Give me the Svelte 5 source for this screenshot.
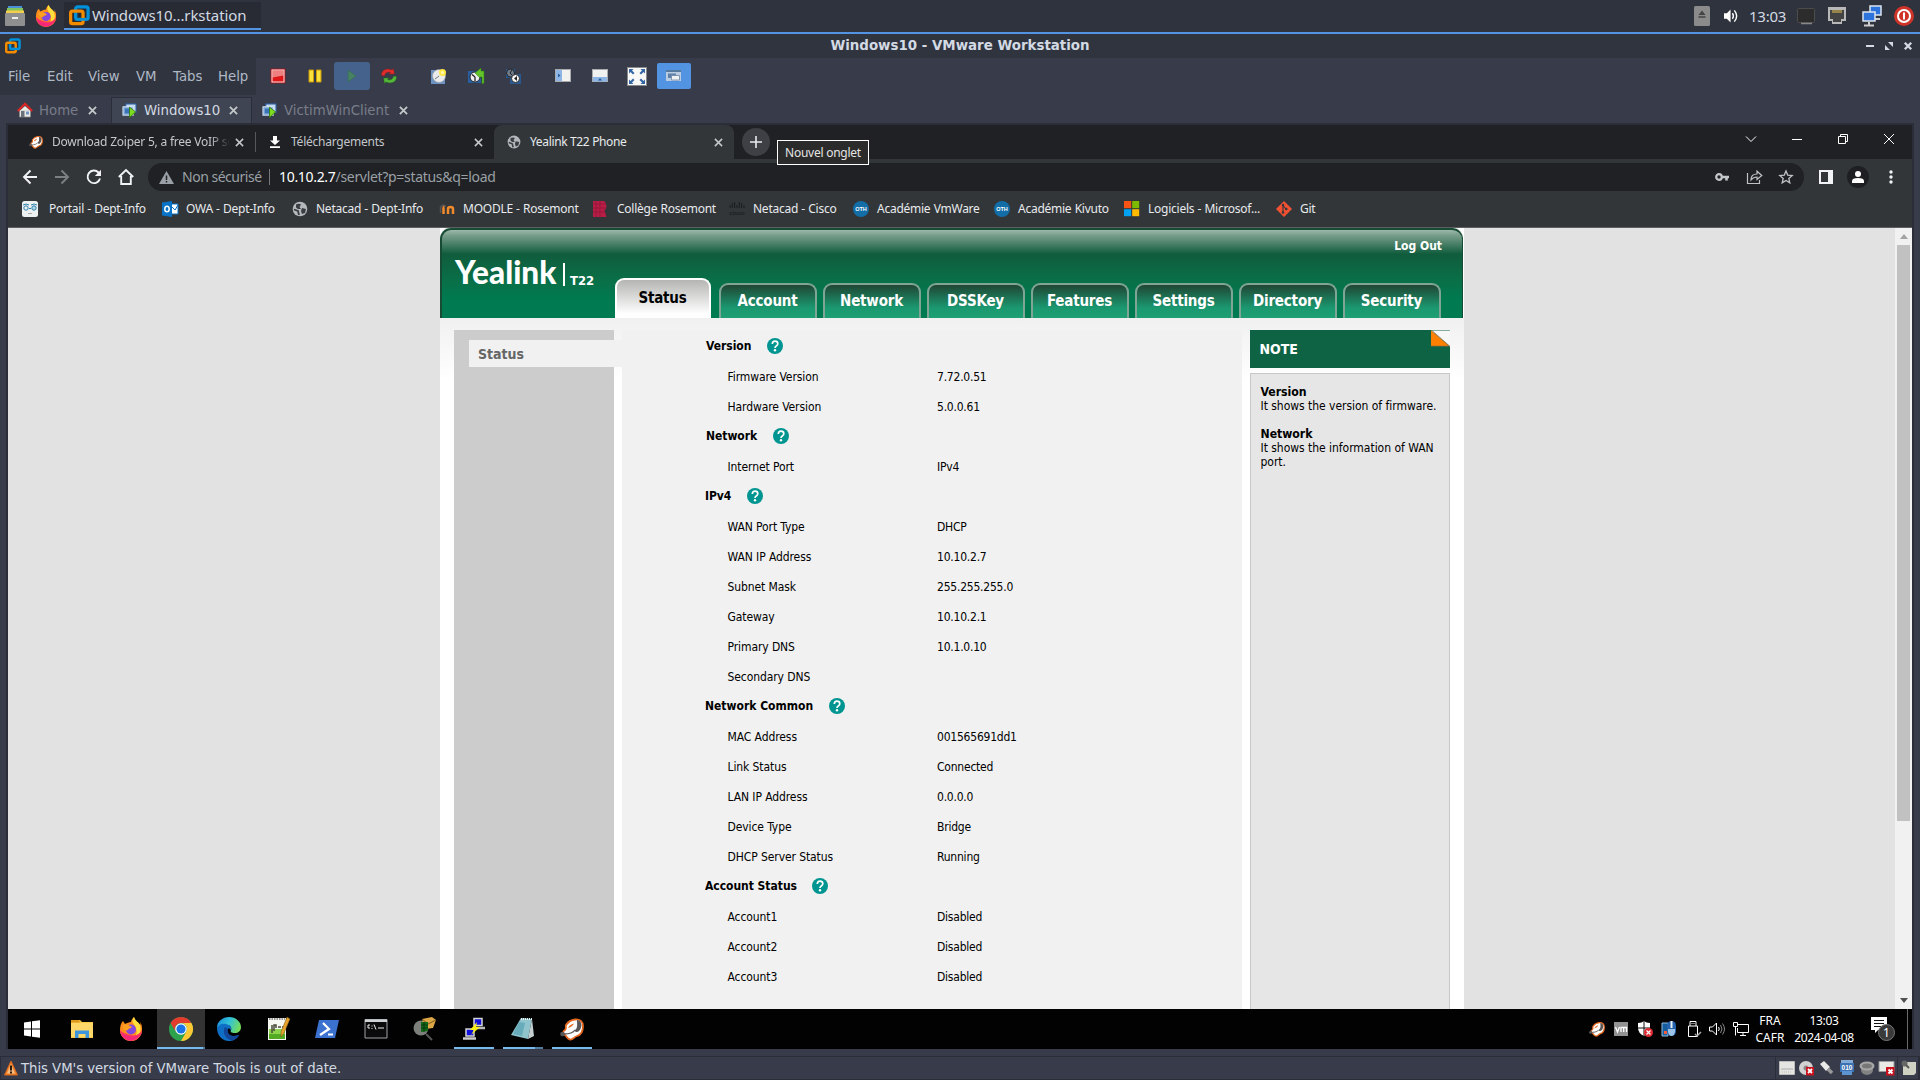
<script>
  const menus = ['File', 'Edit', 'View', 'VM', 'Tabs', 'Help'];
  const bookmarks = [
    ['portail', 'Portail - Dept-Info'],
    ['owa', 'OWA - Dept-Info'],
    ['globe', 'Netacad - Dept-Info'],
    ['moodle', 'MOODLE - Rosemont'],
    ['rosemont', 'Collège Rosemont'],
    ['cisco', 'Netacad - Cisco'],
    ['oth', 'Académie VmWare'],
    ['oth', 'Académie Kivuto'],
    ['microsoft', 'Logiciels - Microsof...'],
    ['git', 'Git']
  ];
  const navTabs = ['Account', 'Network', 'DSSKey', 'Features', 'Settings', 'Directory', 'Security'];
  const sections = [
    { title: 'Version', key: 'version', rows: [['Firmware Version', '7.72.0.51'], ['Hardware Version', '5.0.0.61']] },
    { title: 'Network', key: 'network', rows: [['Internet Port', 'IPv4']] },
    {
      title: 'IPv4', key: 'ipv4',
      rows: [
        ['WAN Port Type', 'DHCP'], ['WAN IP Address', '10.10.2.7'], ['Subnet Mask', '255.255.255.0'],
        ['Gateway', '10.10.2.1'], ['Primary DNS', '10.1.0.10'], ['Secondary DNS', '']
      ]
    },
    {
      title: 'Network Common', key: 'common',
      rows: [
        ['MAC Address', '001565691dd1'], ['Link Status', 'Connected'], ['LAN IP Address', '0.0.0.0'],
        ['Device Type', 'Bridge'], ['DHCP Server Status', 'Running']
      ]
    },
    { title: 'Account Status', key: 'account', rows: [['Account1', 'Disabled'], ['Account2', 'Disabled'], ['Account3', 'Disabled']] }
  ];
  const taskApps = ['windows', 'explorer', 'firefox', 'chrome', 'edge', 'notepadpp', 'powershell', 'cmd', 'wireshark', 'putty', 'notepad', 'zoiper'];
</script>

{#snippet vmware()}
  <rect x="7" y="1.5" width="13" height="13" rx="2" fill="none" stroke="#0091da" stroke-width="3.4" />
  <rect x="1.7" y="6" width="13" height="13" rx="2" fill="none" stroke="#f38b00" stroke-width="3.4" />
  <path d="M7 9V12.500M9.500 14.500h7" stroke="#0091da" stroke-width="3" fill="none" />
{/snippet}

{#snippet vmicon()}
  <rect x="4" y="1" width="11" height="9" fill="#c4d9ef" stroke="#2a5b9c" stroke-width="1.2" />
  <rect x="1" y="4" width="11" height="9" fill="#7fa8d6" stroke="#d9e7f6" stroke-width="1" />
  <rect x="3" y="6" width="7" height="5" fill="#3a74b8" />
  <path d="M8 4.500 14.500 9.500 8 15.500Z" fill="#7ddc1f" stroke="#2f7a0a" stroke-width=".9" />
{/snippet}

{#snippet cross()}
  <svg class="cross" viewBox="0 0 10 10"><path d="m1 1 8 8M9 1 1 9" /></svg>
{/snippet}

{#snippet firefox()}
  <path d="M1 13C1 9 2 6 4 4l2 3c2-1 4-2 6-2 0-2 2-4 3-5 1 4 4 5 6 8 1-1 0-2 0-3 2 3 2 5 2 8a11 11 0 0 1-22 0Z" fill="#ff8d1c" />
  <path d="M15 0c1 4 5 5 6 8 2 7-1 12-7 14 5-5 4-9 2-13-2-3-4-6-1-9Z" fill="#ffdf3b" />
  <path d="M1 13a11 11 0 0 0 22 0c-2 4-6 6-11 5-6-1-9-3-11-5Z" fill="#ff3a5d" />
  <path d="M2 15a10 10 0 0 0 12 8c3-1 5-3 7-5-4 2-14 3-19-3Z" fill="#ee1a8f" opacity=".6" />
  <circle cx="12" cy="12.500" r="5" fill="#8149e0" />
  <path d="M4 8c3-1 6 0 9 2-1 2-4 1-4 3-3 1-6-1-5-5Z" fill="#ffa022" />
{/snippet}

{#snippet zoiper()}
  <path d="M6 8C8 5 11 3 15 2.500c5-.5 8 2 8 6.500 0 5-2 9-6 10-3 1-4 4-7 3.500-3-.5-3-3-5-4.500-3-1-2-4 0-5 2-2 0-3 1-5Z" fill="#fff" stroke="#e5671d" stroke-width="1.800" />
  <path d="M8 11c1-2 3-4 6-4.500-1 2-3 4-6 4.500Z" fill="#e5671d" />
  <path d="M17 3c5 0 6 7 2 11-2 2-4.500 1-4-1 3-2 2-6 2-10Z" fill="#5a5656" />
  <circle cx="2.500" cy="17" r="2.300" fill="#5b5656" /><path d="M4 17c5 0 9-1 11-4" stroke="#5b5656" stroke-width="1.300" fill="none" />
{/snippet}

{#snippet globe()}
  <circle cx="8" cy="8" r="7.300" fill="#b4b8bc" />
  <path d="M4 3.500c2-1 4-1 5 0L7.500 6 9 8H6L4 6.500ZM10 7l4 1-1 4-3 1-1-3Z" fill="#3a3d41" />
  <path d="M2 8.500 6 10l1 4" stroke="#3a3d41" stroke-width="1.800" fill="none" />
{/snippet}

<div class="desktop">
  <header class="panel">
    <svg class="cabinet" viewBox="0 0 20 20"><path d="M3 0h14v3H3z" fill="#4a8fd6" /><path d="M2 2h16v4H2z" fill="#82c35a" /><path d="M1 4.500h18V8H1z" fill="#f5cf4c" /><rect y="7" width="20" height="13" rx="1" fill="#8f8f8f" /><path d="M7 12h6" stroke="#eee" stroke-width="2" /></svg>
    <svg class="pfox" viewBox="0 0 24 24">{@render firefox()}</svg>
    <div class="taskbtn"><svg viewBox="0 0 22 21">{@render vmware()}</svg><span>Windows10...rkstation</span></div>
    <div class="paneltray">
      <svg class="eject" viewBox="0 0 16 20"><rect width="16" height="20" rx="1.500" fill="#8b8b8b" /><path d="M8 4.500 11.500 9h-7ZM4.500 10.200h7v1.500h-7Z" fill="#444" /></svg>
      <svg class="vol" viewBox="0 0 16 14"><path d="M0 4h3l4-4v14l-4-4H0Z" fill="#fff" /><path d="M9 4q2 3 0 6M11 1q5 6 0 12" fill="none" stroke="#fff" stroke-width="1.500" /></svg>
      <span>13:03</span>
      <svg class="mon" viewBox="0 0 18 17"><rect x=".5" y=".5" width="17" height="14" rx="1" fill="#2c2c2c" stroke="#4c4c4c" /><path d="M4 15.500h11" stroke="#888" stroke-width="1.500" /></svg>
      <svg class="eth" viewBox="0 0 20 18"><path d="M1 0h18v14h-4v3H5v-3H1Z" fill="#b8b8b8" /><path d="M3 3h14v9h-3v3H6v-3H3Z" fill="#444" /><path d="M6 3v3M8 3v3M10 3v3M12 3v3M14 3v3" stroke="#e8c550" /></svg>
      <svg class="net" viewBox="0 0 20 22"><rect x="8" y="1" width="11" height="9" fill="#2d73dc" stroke="#dce6ef" stroke-width="1.500" /><path d="M11 14h7" stroke="#ccc" stroke-width="2" /><rect x="1" y="7" width="12" height="9" fill="#2d73dc" stroke="#dce6ef" stroke-width="1.500" /><path d="M7 17v3M2 20.500h10" stroke="#ccc" stroke-width="2" /></svg>
      <svg class="power" viewBox="0 0 20 20"><circle cx="10" cy="10" r="10" fill="#cf3429" /><circle cx="10" cy="10" r="6" fill="none" stroke="#fff" stroke-width="2" /><path d="M10 6.500v7" stroke="#fff" stroke-width="2" /></svg>
    </div>
  </header>

  <div class="titlebar">
    <svg class="tlogo" viewBox="0 0 22 21">{@render vmware()}</svg>
    <b>Windows10 - VMware Workstation</b>
    <div class="wm">
      <svg viewBox="0 0 8 8"><path d="M0 4h8" stroke="#d3dae3" stroke-width="2" /></svg>
      <svg viewBox="0 0 8 8"><path d="M3 0h5v5ZM0 3v5h5Z" fill="#d3dae3" /></svg>
      <svg viewBox="0 0 8 8"><path d="m.8.8 6.400 6.400M7.200.8.800 7.200" stroke="#d3dae3" stroke-width="2.300" /></svg>
    </div>
  </div>

  <div class="menurow">
    <nav class="menus">{#each menus as m}<span>{m}</span>{/each}</nav>
    <div class="tools">
      <svg class="t1" viewBox="0 0 16 16"><rect x="1" y="1" width="14" height="14" fill="#dd1717" stroke="#a01218" stroke-width=".8" /><path d="M2.500 2.500h11v5l-11 2Z" fill="#ee8080" /><rect x="2" y="2" width="12" height="12" fill="none" stroke="#f9e3e3" /></svg>
      <svg class="t2" viewBox="0 0 16 16"><path d="M2 2h4.500v12H2zM9.500 2H14v12H9.500z" fill="#fbe13b" stroke="#c99908" /></svg>
      <div class="play"><svg viewBox="0 0 16 16"><path d="m4 2 8 6-8 6Z" fill="#478360" stroke="#3b6c66" /></svg></div>
      <svg class="t4" viewBox="0 0 16 16"><path d="M.5 7.500C0 2 6-.5 11 2L12.500.500 13.500 6 8 6 9.500 4.500C6 3.500 4 5 3.500 8Z" fill="#e22c2c" stroke="#811c20" stroke-width=".5" /><path d="M15.500 8.500C16 14 10 16.500 5 14L3.500 15.500 2.500 10 8 10 6.500 11.500C10 12.500 12 11 12.500 8Z" fill="#56b83a" stroke="#205d1a" stroke-width=".5" /></svg>
      <svg class="t5" viewBox="0 0 16 16"><path d="M0 2h14v14H0Z" fill="#6d93c5" /><circle cx="8" cy="8" r="6.500" fill="#e8eaec" stroke="#999" stroke-width=".6" /><path d="M8 8 4 11" stroke="#777" /><circle cx="11.500" cy="4.500" r="3.500" fill="#ffe640" /><circle cx="11.500" cy="4.500" r="1.500" fill="#fffac0" /></svg>
      <svg class="t6" viewBox="0 0 16 16"><path d="M0 3h13v12H0Z" fill="#295fa0" /><circle cx="7" cy="9" r="5" fill="#eceef0" stroke="#222" /><path d="M7 9 4 6.500M7 9v4" stroke="#222" stroke-width="1.300" /><path d="M7 5 13 0v3h3v12l-2 1V9h-2v1Z" fill="#62c32b" stroke="#2e7a0c" stroke-width=".5" /></svg>
      <svg class="t7" viewBox="0 0 16 16"><path d="M1 1h9v9H1ZM5 6h11v10H5Z" fill="#27588f" /><circle cx="5.500" cy="5" r="4" fill="#6f7c8c" stroke="#222" /><path d="M7 2 5 5l2 2" stroke="#222" fill="none" /><circle cx="10.500" cy="10.500" r="4" fill="#f5f5f5" stroke="#2a2a2a" /><path d="M12 8v5l-3-2.500Z" fill="#222" /></svg>
      <svg class="t8" viewBox="0 0 16 14"><rect x=".5" y=".5" width="15" height="12" fill="#f1f1ef" stroke="#a9abae" /><path d="M1 1h6v11H1Z" fill="#8db5e5" /><path d="m3 4.500 2.500 2L3 8.500Z" fill="#285b9d" /></svg>
      <svg class="t9" viewBox="0 0 16 14"><rect x=".5" y=".5" width="15" height="12" fill="#f1f1ef" stroke="#a9abae" /><path d="M1 8h14v4.500H1Z" fill="#8db5e5" /><path d="m6 11.500 2-2.500 2 2.500Z" fill="#285b9d" /></svg>
      <svg class="t10" viewBox="0 0 20 19"><rect x=".5" y=".5" width="19" height="18" fill="#f8f8f6" stroke="#88898b" /><path d="M2 2h4.500L5 3.500 7.500 6 6 7.500 3.500 5 2 6.500ZM18 2h-4.500L15 3.500 12.500 6 14 7.500 16.500 5 18 6.500ZM2 17h4.500L5 15.500 7.500 13 6 11.500 3.500 14 2 12.500ZM18 17h-4.500l1.500-1.500-2.500-2.500 1.500-1.500 2.500 2.500 1.500-1.500Z" fill="#3465a4" /></svg>
      <div class="unity"><svg viewBox="0 0 16 14"><path d="M0 1h15v11H0Z" fill="#b9cce2" /><path d="M0 1h15v2H0Z" fill="#56799f" /><path d="M2 4.500h8V9H2Z" fill="#5d7fa8" /><path d="M5.500 6.500h8V11h-8Z" fill="#eef0f2" stroke="#6f88a5" stroke-width=".8" /></svg></div>
    </div>
  </div>

  <div class="vmtabs">
    <div class="vt home"><svg class="vi" viewBox="0 0 16 16"><path d="M2.500 8h11v7h-11Z" fill="#e9e9e6" stroke="#888" stroke-width=".7" /><path d="M4 9h3.500v6H4Z" fill="#67717a" /><path d="M9 9.500h3v3H9Z" fill="#7296c0" /><path d="M3 8.500 8 4l5 4.500Z" fill="#e9e9e6" /><path d="M.8 9 8 1.700 15.200 9" fill="none" stroke="#dd2525" stroke-width="2" /></svg><span>Home</span>{@render cross()}</div>
    <div class="vt on"><svg class="vi" viewBox="0 0 16 16">{@render vmicon()}</svg><span>Windows10</span>{@render cross()}</div>
    <div class="vt"><svg class="vi" viewBox="0 0 16 16">{@render vmicon()}</svg><span>VictimWinClient</span>{@render cross()}</div>
  </div>

  <main class="screen">
    <div class="strip">
      <div class="ct c1"><svg class="ci" viewBox="0 0 24 24">{@render zoiper()}</svg><span class="fade">Download Zoiper 5, a free VoIP so</span>{@render cross()}</div>
      <div class="ct c2"><svg class="dl" viewBox="0 0 10 12"><path d="M3 0h4v4.500h3L5 9 0 4.500h3ZM0 10.200h10V12H0Z" fill="#fff" /></svg><span>Téléchargements</span>{@render cross()}</div>
      <div class="ct c3"><svg class="ci" viewBox="0 0 16 16">{@render globe()}</svg><span>Yealink T22 Phone</span>{@render cross()}</div>
      <div class="plus"><svg viewBox="0 0 12 12"><path d="M6 0v12M0 6h12" stroke="#e8eaed" stroke-width="1.600" /></svg><div class="tip">Nouvel onglet</div></div>
      <div class="winctl">
        <svg viewBox="0 0 10 10"><path d="m0 2.500 5 5 5-5" /></svg>
        <svg viewBox="0 0 10 10"><path d="M0 5.500h10" /></svg>
        <svg viewBox="0 0 10 10"><path d="M.5 2.500h7v7h-7ZM2.500 2.500v-2h7v7h-2" /></svg>
        <svg viewBox="0 0 10 10"><path d="m0 0 10 10M10 0 0 10" /></svg>
      </div>
    </div>

    <div class="addr">
      <svg class="nv" viewBox="0 0 16 16"><path d="M15 8H2M8.500 1.500 2 8l6.500 6.500" /></svg>
      <svg class="nv dim" viewBox="0 0 16 16"><path d="M1 8h13M7.500 1.500 14 8l-6.500 6.500" /></svg>
      <svg class="nv" viewBox="0 0 16 16"><path d="M14 9.500A6.300 6.300 0 1 1 12.500 3.500L14 5" /><path d="M15 .8V7H8.800Z" fill="#f1f3f4" stroke="none" /></svg>
      <svg class="nv hm" viewBox="0 0 16 16"><path d="M.8 8 8 1l7.200 7M3.200 7v8h9.600V7" /></svg>
      <div class="omni">
        <svg class="warn" viewBox="0 0 15 13"><path d="M7.500 0 15 13H0Z" fill="#9aa0a6" /><path d="M7.500 4.500V9M7.500 10v1.500" stroke="#202124" stroke-width="1.500" /></svg>
        <span class="ns">Non sécurisé</span>
        <span class="url"><i>10.10.2.7</i>/servlet?p=status&amp;q=load</span>
        <svg class="key" viewBox="0 0 14 8"><circle cx="4" cy="4" r="2.800" fill="none" stroke="#c4c7ca" stroke-width="2.200" /><path d="M7 4h7M11.500 4v3.500" stroke="#c4c7ca" stroke-width="2.600" fill="none" /></svg>
        <svg class="share" viewBox="0 0 16 14"><path d="M.5 3v10.500h12V10M4 10c0-4 2-6 6-6V1.200L14.800 5.500 10 9.500V7C7 7 5.500 8 4 10Z" fill="none" stroke="#bfc2c5" stroke-width="1.200" /></svg>
        <svg class="star" viewBox="0 0 14 14"><path d="m7 1 1.700 4.100 4.500.4-3.400 2.900 1 4.400L7 10.500l-3.800 2.300 1-4.400L.8 5.500l4.500-.4Z" fill="none" stroke="#bfc2c5" stroke-width="1.300" /></svg>
      </div>
      <svg class="sp" viewBox="0 0 14 14"><path d="M0 0h14v14H0ZM2 2v10h7V2Z" fill="#f1f3f4" fill-rule="evenodd" /></svg>
      <div class="prof"><svg viewBox="0 0 12 12"><circle cx="6" cy="3" r="3" fill="#fff" /><path d="M0 12v-2q0-3 6-3t6 3v2Z" fill="#fff" /></svg></div>
      <svg class="dots" viewBox="0 0 4 14"><circle cx="2" cy="2" r="1.700" /><circle cx="2" cy="7" r="1.700" /><circle cx="2" cy="12" r="1.700" /></svg>
    </div>

    <div class="marks">
      {#each bookmarks as [kind, label]}
        <div class="bm">
          <svg viewBox="0 0 16 16">
            {#if kind === 'portail'}<rect width="16" height="16" rx="2.500" fill="#eef1f2" /><path d="M1 4q3-2 6 0M9 4q3-2 6 0M7 7.500h2" stroke="#2d83ad" fill="none" /><circle cx="4" cy="7" r="2.200" fill="none" stroke="#2d83ad" /><circle cx="12" cy="7" r="2.200" fill="#b4d4e3" stroke="#2d83ad" /><path d="M6 12.500h4" stroke="#aaa" />
            {:else if kind === 'owa'}<path d="M8 3h8v10H8Z" fill="#fff" stroke="#0872c6" /><path d="m9 5 4 4 3-5" stroke="#0872c6" fill="none" /><path d="M0 1.500 10 0v16L0 14.500Z" fill="#0872c6" /><ellipse cx="5" cy="8" rx="2.200" ry="2.800" fill="none" stroke="#fff" stroke-width="1.500" />
            {:else if kind === 'globe'}{@render globe()}
            {:else if kind === 'moodle'}<path d="M1 6 4 4l3 1M1.500 6v6" stroke="#555" stroke-width="1.500" fill="none" /><path d="M4.500 13V7q0-1 1-1M9 13V8q0-2 2.500-2T14 8v5" stroke="#f28a2c" stroke-width="2.500" fill="none" />
            {:else if kind === 'rosemont'}<path d="M0 0h11q2.500 2 2.500 5 0 3-2 4l2 7H0Z" fill="#b81d45" /><path d="M0 3h13M0 7h13M0 11h12M3 0v16M7 0v16" stroke="#8b1838" stroke-width=".7" />
            {:else if kind === 'cisco'}<path d="M1 4v3M3.300 2v5M5.600 1v6M8 4v3M10.300 1v6M12.600 2v5M15 4v3" stroke="#1a1c1e" /><text x="8" y="13.500" class="tiny">cisco</text>
            {:else if kind === 'oth'}<circle cx="8" cy="8" r="8" fill="#136da6" /><text x="8" y="10" class="oth">OTH</text>
            {:else if kind === 'microsoft'}<path d="M0 0h7.200v7.200H0Z" fill="#f65314" /><path d="M8.200 0h7v7.200h-7Z" fill="#7cbb00" /><path d="M0 8.200h7.200v7H0Z" fill="#00a1f1" /><path d="M8.200 8.200h7v7h-7Z" fill="#ffbb00" />
            {:else}<path d="m8 0 8 8-8 8-8-8Z" fill="#f05133" /><path d="M7 3v9M7 4.500 10 8" stroke="#33363a" stroke-width="1.100" /><circle cx="7" cy="4" r="1.200" fill="#33363a" /><circle cx="7" cy="11.500" r="1.300" fill="#33363a" /><circle cx="10.300" cy="8" r="1.300" fill="#33363a" />{/if}
          </svg>
          <span>{label}</span>
        </div>
      {/each}
    </div>

    <div class="view">
      <div class="page">
        <header class="yhead">
          <div class="logout">Log Out</div>
          <div class="ynav">
            <div class="brand"><span class="yl">Yealink</span><span class="model">T22</span></div>
            <div class="yt active">Status</div>
            {#each navTabs as t}<div class="yt">{t}</div>{/each}
          </div>
        </header>
        <div class="body">
          <aside><div class="side">Status</div></aside>
          <section class="content">
            {#each sections as s}
              <h3 class={s.key}>{s.title}<svg viewBox="0 0 16 16"><circle cx="8" cy="8" r="8" fill="#009590" /><path d="M5.300 6Q5.300 3.200 8 3.200T10.800 5.700Q10.800 7 9.300 7.900 8 8.700 8 10" fill="none" stroke="#fff" stroke-width="1.700" /><circle cx="8" cy="12.200" r="1.200" fill="#fff" /></svg></h3>
              {#each s.rows as [k, v]}<div class="row"><span>{k}</span><span>{v}</span></div>{/each}
            {/each}
          </section>
          <div class="notes">
            <div class="notehead">NOTE<svg viewBox="0 0 20 17"><path d="M0 0h20v17Z" fill="#f7f7f7" /><path d="M0 0v16.500h19Z" fill="#ff7f00" /><path d="M1 0 19 16M0 16.500h20" stroke="#8a6a42" fill="none" stroke-width=".8" /></svg></div>
            <div class="notebody"><b>Version</b><p>It shows the version of firmware.</p><b>Network</b><p>It shows the information of WAN port.</p></div>
          </div>
        </div>
      </div>
      <div class="scroll"><svg viewBox="0 0 8 5"><path d="M0 5h8L4 0Z" fill="#a3a3a3" /></svg><div class="thumb"></div><svg viewBox="0 0 8 5"><path d="M0 0h8L4 5Z" fill="#505050" /></svg></div>
    </div>

    <div class="taskbar">
      <div class="apps">
        {#each taskApps as a}
          <div class={['app', a]}>
            <svg viewBox="0 0 24 24">
              {#if a === 'windows'}<path d="m4 5.500 7-1V11.500H4ZM12 4.300l8-1.100v8.300h-8ZM4 12.500h7V19.500l-7-1ZM12 12.500h8v8.300l-8-1.100Z" fill="#fff" />
              {:else if a === 'explorer'}<path d="M1 3h9l2 2h11v16H1Z" fill="#f8c748" /><path d="M1 3h8l1 2.500H1Z" fill="#dd9a1a" /><path d="M1 6h22v14H1Z" fill="#ffd869" /><path d="M5 13.500h14V21h-3.500v-4h-7v4H5Z" fill="#3f95dc" />
              {:else if a === 'firefox'}{@render firefox()}
              {:else if a === 'chrome'}<circle cx="12" cy="12" r="12" fill="#2ca24c" /><path d="M1.600 6A12 12 0 0 1 22.400 6H12a6 6 0 0 0-5.200 9Z" fill="#e33b2e" /><path d="M22.400 6A12 12 0 0 1 12 24l5.200-9A6 6 0 0 0 12 6Z" fill="#fcc934" /><circle cx="12" cy="12" r="5.800" fill="#fff" /><circle cx="12" cy="12" r="4.600" fill="#1b73e8" />
              {:else if a === 'edge'}
                <defs>
                  <linearGradient id="edgeTop" x1="0" y1="0.200" x2="1" y2="0.500"><stop offset="0" stop-color="#1a8fdc" /><stop offset=".5" stop-color="#32c2d8" /><stop offset="1" stop-color="#74dd5c" /></linearGradient>
                </defs>
                <path d="M0 11C0 4 6 0 12 0c7 0 12 5 12 10 0 4-3 6-6 6-4 0-5-1-4-3 1-3-1-5-5-5-4 0-7 1-9 3Z" fill="url(#edgeTop)" />
                <path d="M0 11C2 7 6 6 9 7c4 1 6 3 5 6-1-1-2-2-3-1-3 4 1 9 11 6-3 5-7 6-10 6C5 24 0 18 0 11Z" fill="#0f6fc4" />
                <path d="M8 10c-3 5 0 12 7 13.500C20 22 21 20 22 18c-8 3-12-1-11-6Z" fill="#12479a" />
              {:else if a === 'notepadpp'}<path d="M2 1h18v22H2Z" fill="#f5f7f1" /><path d="M3 12h16v10H3Z" fill="#8dd34b" /><path d="M3 17h16v5H3Z" fill="#52ab20" /><path d="M3 2h16" stroke="#999" stroke-width="2" stroke-dasharray="1.500 1" /><path d="M6 8v8M8 14V8h2v3M12 10h3M16 10h2" stroke="#474a38" stroke-width="1.500" fill="none" /><path d="m21 0 3 2-6 14-3 4 0-5Z" fill="#e5a32b" stroke="#765016" stroke-width=".5" />
              {:else if a === 'powershell'}<path d="M4 3h20l-4 18H0Z" fill="#3b72cf" /><path d="m8 6 6 6-9 6M13 17.500h5" stroke="#fff" stroke-width="2.200" fill="none" />
              {:else if a === 'cmd'}<path d="M1 2.500h22v18.500H1Z" fill="#0a0a0a" stroke="#9da1a5" /><path d="M1 2.500h22V5H1Z" fill="#cfd2d5" /><path d="M6 8H4v3h2M8 8.500v1M8 11v1M10 7.500l2 5M14 11h6" stroke="#eee" fill="none" />
              {:else if a === 'wireshark'}<circle cx="8" cy="11" r="7.500" fill="#7c7f7a" /><path d="m9 2 10-2 4 3-3 8-8 1Z" fill="#dca747" /><path d="m9 2 6 5 8-4" stroke="#7d5a1a" fill="none" /><path d="M8 5h7v9l-7 1Z" fill="#126a19" /><path d="M8 8h7M8 11h7M11 5v10" stroke="#062f08" stroke-width=".8" /><path d="m13 17 6 6" stroke="#555" stroke-width="2" />
              {:else if a === 'putty'}<path d="M12 1.500h8v7h-8Z" fill="#1010da" stroke="#d5d5d5" stroke-width="1.500" /><path d="M14 11h9" stroke="#bbb" stroke-width="2.500" /><path d="M4 12h8v7H4Z" fill="#1010da" stroke="#d5d5d5" stroke-width="1.500" /><path d="M1 21.500h13" stroke="#ccc" stroke-width="2.500" /><path d="m15 5-7 8 4 0-3 5 9-8-4 0Z" fill="#f9ef17" />
              {:else if a === 'notepad'}<path d="m10 1 11 1-4 20L0 18Z" fill="#8fc4cd" /><path d="m8 5 6 1-3 13-9-2Z" fill="#4f9db0" opacity=".6" /><path d="m21 2 2 17-6 3Z" fill="#c4cfd2" /><path d="M10 2h11" stroke="#e7f3f5" stroke-width="2" stroke-dasharray="1 1" />
              {:else}{@render zoiper()}{/if}
            </svg>
          </div>
        {/each}
      </div>
      <div class="systray">
        <svg viewBox="0 0 24 24">{@render zoiper()}</svg>
        <svg viewBox="0 0 16 16"><path d="M1 1h14v14H1Z" fill="#929292" /><path d="m2.500 6 2 5 2-5M8 11V6.500h5.500V11M10.700 7v4" stroke="#fff" fill="none" stroke-width="1.300" /></svg>
        <svg viewBox="0 0 16 16"><path d="M1 2q4 0 6-2 2 2 6 2v5q0 5-6 8-6-3-6-8Z" fill="#fff" /><path d="M7 0v15M1 7h12" stroke="#111" /><circle cx="11.500" cy="11.500" r="4.500" fill="#df2b32" /><path d="m9.500 9.500 4 4M13.500 9.500l-4 4" stroke="#fff" stroke-width="1.200" /></svg>
        <svg viewBox="0 0 16 16"><path d="M1 2h6v13H1Z" fill="#175c9d" stroke="#90bde3" /><path d="M3 10h3v3H3Z" fill="#f05c3d" /><rect x="6" width="9" height="15" rx="4.500" fill="#2462ae" /><path d="M10.500 0v7" stroke="#e8f0f7" stroke-width="2" fill="none" /><path d="M7 8h7v3q-1 4-3.500 4T7 11Z" fill="#9cc4e8" /></svg>
        <svg viewBox="0 0 16 16"><path d="M5 5V.5h6V5M3.500 5h9v10.500h-9ZM7 2v1M9 2v1" fill="none" stroke="#fff" /><path d="m10 13 2 2 4-4" stroke="#aaa" fill="none" stroke-width="1.500" /></svg>
        <svg viewBox="0 0 16 16"><path d="M.5 6h3l4-4v12l-4-4h-3Z" fill="none" stroke="#fff" /><path d="M9.500 6q1.500 2 0 4" stroke="#fff" fill="none" /><path d="M11.500 4q3 4 0 8M13.500 2.500q4 5.500 0 11" fill="none" stroke="#8a8a8a" /></svg>
        <svg viewBox="0 0 16 16"><path d="M5 3.500h10.500v8H4.500V7M10 12v2M7 14.500h6M.5 1.500h4v4h-4ZM2.500 6v8.500" fill="none" stroke="#fff" /></svg>
        <div class="two lang"><span>FRA</span><span>CAFR</span></div>
        <div class="two date"><span>13:03</span><span>2024-04-08</span></div>
        <div class="notif"><svg viewBox="0 0 24 24"><path d="M0 0h16v13H7l-3 3v-3H0Z" fill="#fff" /><path d="M3 3.500h10M3 6.500h10M3 9.500h7" stroke="#111" /><circle cx="15.500" cy="15.500" r="8" fill="#3a3a3a" stroke="#777" /><text x="15.500" y="20">1</text></svg></div>
        <div class="show"></div>
      </div>
    </div>
  </main>

  <footer class="status">
    <div class="msg"><svg viewBox="0 0 14 16"><path d="M7 1 13.500 15H.5Z" fill="#ef8730" stroke="#d8641c" /><path d="M7 4 11 13.500H3Z" fill="#f9bc80" /><path d="M7 5.500v5M7 11.500v2" stroke="#2b1c10" stroke-width="2" /></svg><span>This VM's version of VMware Tools is out of date.</span></div>
    <div class="devs">
      <svg viewBox="0 0 16 16"><path d="M.5 1.500h15v13H.5Z" fill="#e5e5e2" stroke="#bbb" /><path d="M2 9h12" stroke="#aaa" /><path d="M3 12h10" stroke="#bbb" stroke-dasharray="1 1" /></svg>
      <svg viewBox="0 0 16 16"><circle cx="7" cy="8" r="7" fill="#d2d2d2" /><circle cx="7" cy="8" r="2.500" fill="#888" /><path d="M7 7h8v8.500H7Z" fill="#c9121d" /><path d="m9 9 4 4M13 9l-4 4" stroke="#fff" stroke-width="1.800" /></svg>
      <svg viewBox="0 0 16 16"><path d="m1 4 4-3 6 6-4 4Z" fill="#e9e9e7" /><path d="m9 9 4 4" stroke="#999" stroke-width="3.500" /></svg>
      <svg viewBox="0 0 16 16"><path d="M2 0h12v4H2Z" fill="#83abd8" /><path d="M1 3h14v9H1Z" fill="#3c72b1" /><path d="M3 11h10v4H3Z" fill="#5d93ce" /><text x="8" y="10" class="ten">010</text></svg>
      <svg viewBox="0 0 16 16"><ellipse cx="8" cy="10" rx="6" ry="5" fill="#828282" /><ellipse cx="8" cy="6" rx="7.500" ry="4.500" fill="#a6a6a6" /><ellipse cx="8" cy="6" rx="5" ry="2.500" fill="#777" /></svg>
      <svg viewBox="0 0 16 16"><path d="M0 1.500h15v10H0Z" fill="#e9e9e6" stroke="#999" /><path d="M7 7h8.500v8.500H7Z" fill="#c9121d" /><path d="m9.500 9.500 4 4M13.500 9.500l-4 4" stroke="#fff" stroke-width="1.800" /></svg>
    </div>
    <div class="memo"><svg viewBox="0 0 16 16"><path d="M2 2h13v11l-2 2H2Z" fill="#cfd1c3" /><circle cx="3.500" cy="3.500" r="3" fill="#666" /><path d="m5 5 3 3" stroke="#555" stroke-width="2" /></svg></div>
  </footer>
</div>

<style>
  :global(body) { margin: 0; background: #383c4a; overflow: hidden; }
  * { box-sizing: border-box; }
  svg { display: block; flex: none; overflow: visible; }
  span { white-space: nowrap; }
  .desktop { width: 1920px; height: 1080px; display: flex; flex-direction: column; background: #383c4a; font-family: "DejaVu Sans", sans-serif; overflow: hidden; }

  .panel { height: 34px; flex: none; display: flex; align-items: center; padding: 0 6px 0 5px; background: #2f333e; border-bottom: 2px solid #5294e2; color: #d3dae3; font: 15px/20px "Noto Sans", sans-serif; }
  .cabinet { width: 20px; height: 20px; }
  .pfox { width: 22px; height: 22px; margin: 0 7px 0 10px; }
  .taskbtn { width: 197px; height: 28px; display: flex; align-items: center; gap: 2px; padding-left: 5px; background: #282b34; border-bottom: 2px solid #5294e2; }
  .taskbtn svg { width: 21px; height: 21px; }
  .taskbtn span { letter-spacing: -.08px; }
  .paneltray { margin-left: auto; display: flex; align-items: center; }
  .eject { width: 16px; height: 20px; margin-right: 14px; }
  .vol { width: 15px; height: 14px; margin-right: 10px; }
  .paneltray span { width: 38px; letter-spacing: -.25px; }
  .mon { width: 18px; height: 17px; margin-left: 10px; }
  .eth { width: 20px; height: 18px; margin-left: 12px; }
  .net { width: 20px; height: 22px; margin-left: 15px; }
  .power { width: 20px; height: 20px; margin-left: 12px; }

  .titlebar { height: 24px; flex: none; display: grid; grid-template-columns: 200px 1fr 200px; align-items: center; background: #2f343f; color: #d3dae3; font-size: 13.400px; }
  .titlebar b { text-align: center; line-height: 22px; padding-bottom: 1px; }
  .tlogo { width: 16px; height: 16px; margin-left: 5px; }
  .wm { display: flex; gap: 11px; justify-content: flex-end; padding-right: 8px; }
  .wm svg { width: 8px; height: 8px; }

  .menurow { height: 37px; flex: none; display: flex; }
  .menus { width: 256px; display: grid; grid-template-columns: 39px 41px 48px 37px 45px 38px; align-items: center; padding-left: 8px; background: #2f343f; color: #afb8c6; font-size: 13.300px; }
  .tools { display: flex; align-items: center; padding: 0 0 1px 14px; }
  .tools > svg { width: 16px; height: 16px; }
  .tools .t2 { margin-left: 21px; }
  .play { width: 36px; height: 28px; border-radius: 3px; background: #45628c; display: grid; place-items: center; margin: 0 11px 0 11px; }
  .play svg, .unity svg { width: 16px; height: 16px; }
  .tools .t5 { margin-left: 34px; }
  .tools .t6 { margin-left: 21px; }
  .tools .t7 { margin-left: 21px; }
  .tools .t8 { margin-left: 34px; height: 14px; }
  .tools .t9 { margin-left: 21px; height: 14px; }
  .tools .t10 { width: 20px; height: 19px; margin-left: 19px; }
  .unity { width: 34px; height: 26px; margin-left: 10px; border-radius: 2px; background: #5294e2; display: grid; place-items: center; }

  .vmtabs { height: 28px; flex: none; display: flex; color: #787d89; font-size: 13.300px; }
  .vt { display: flex; align-items: center; margin-top: 2px; padding-left: 10px; }
  .vi { width: 15px; height: 15px; margin-right: 7px; }
  .cross { width: 9px; height: 9px; stroke: #c3c8c8; stroke-width: 2; fill: none; }
  .vt .cross { margin-left: 10px; }
  .home { width: 111px; padding-left: 17px; }
  .home .vi { width: 16px; height: 16px; margin-right: 6px; }
  .on { width: 141px; background: #3f4552; border: 1px solid #2b2e39; border-bottom: 0; color: #d3dae3; }
  .on .cross { margin-left: 9px; }

  .screen { width: 1908px; height: 926px; flex: none; margin-left: 6px; border: 2px solid #2b2e39; border-width: 2px 2px 0; display: flex; flex-direction: column; color: #e8eaed; font: 12px/16px "Noto Sans", sans-serif; }
  .strip { height: 34px; flex: none; display: flex; align-items: center; background: #202124; color: #c3c7cb; }
  .strip span { letter-spacing: -.23px; }
  .ct { height: 34px; display: flex; align-items: center; }
  .ct .cross { margin-left: auto; stroke-width: 1.700; width: 9px; height: 9px; }
  .ci { width: 14px; height: 14px; margin-right: 9px; }
  .c1 { width: 248px; padding: 0 11px 0 21px; }
  .c1::after { content: ""; width: 1px; height: 20px; background: #55585c; margin: 0 -11px 0 11px; }
  .fade { width: 178px; -webkit-mask: linear-gradient(90deg, #000 158px, transparent 178px); mask: linear-gradient(90deg, #000 158px, transparent 178px); }
  .c2 { width: 238px; padding: 0 11px 0 14px; }
  .dl { width: 10px; height: 12px; margin-right: 11px; }
  .c3 { width: 240px; padding: 0 11px 0 13px; background: #323639; border-radius: 8px 8px 0 0; color: #e8eaed; }
  .c3 span { letter-spacing: -.35px; }
  .plus { position: relative; width: 28px; height: 28px; margin-left: 8px; border-radius: 50%; background: #3f4045; display: grid; place-items: center; }
  .plus svg { width: 12px; height: 12px; }
  .tip { position: absolute; left: 35px; top: 12px; width: 92px; height: 25px; border: 1px solid #fff; background: #2b2b2b; color: #e4e4e4; text-align: center; line-height: 24px; letter-spacing: -.25px; white-space: nowrap; z-index: 2; }
  .winctl { margin-left: auto; display: flex; gap: 36px; padding: 0 18px 6px 0; }
  .winctl svg { width: 10px; height: 10px; fill: none; stroke: #fff; stroke-width: 1; }

  .addr { height: 36px; flex: none; display: flex; align-items: center; background: #323639; padding: 0 20px 0 14px; }
  .nv { width: 16px; height: 16px; margin-right: 16px; fill: none; stroke: #f1f3f4; stroke-width: 1.900; }
  .dim { stroke: #7d8083; }
  .hm { margin-right: 14px; }
  .omni { width: 1656px; height: 28px; border-radius: 14px; background: #202124; display: flex; align-items: center; padding: 0 11px 0 11px; font-size: 14px; color: #9aa0a6; }
  .warn { width: 15px; height: 13px; margin-right: 8px; }
  .ns { width: 88px; line-height: 16px; border-right: 1px solid #75797d; letter-spacing: -.48px; }
  .url { margin-left: 9px; letter-spacing: -.31px; }
  .url i { font-style: normal; color: #fff; }
  .key { width: 14px; height: 8px; margin-left: auto; }
  .share { width: 16px; height: 14px; margin-left: 18px; }
  .star { width: 14px; height: 14px; margin-left: 16px; }
  .sp { width: 14px; height: 14px; margin-left: 15px; }
  .prof { width: 22px; height: 22px; margin-left: 14px; border-radius: 50%; background: #1d1f22; display: grid; place-items: center; }
  .prof svg { width: 12px; height: 12px; }
  .dots { width: 4px; height: 14px; margin-left: 20px; margin-right: -1px; fill: #f1f3f4; }

  .marks { height: 33px; flex: none; display: grid; grid-template-columns: 140px 130px 147px 154px 136px 124px 141px 130px 152px 60px; align-items: center; padding: 0 0 4px 14px; background: #323639; border-bottom: 1px solid #5d6063; }
  .bm { display: flex; align-items: center; gap: 8px; }
  .bm:first-child { gap: 11px; }
  .bm svg { width: 16px; height: 16px; }
  .bm span { letter-spacing: -.25px; word-spacing: .4px; }
  .tiny { font: bold 6px "Liberation Sans", sans-serif; fill: #1a1c1e; text-anchor: middle; }
  .oth { font: bold 5.500px "Liberation Sans", sans-serif; fill: #fff; text-anchor: middle; }

  .view { height: 781px; flex: none; display: flex; background: #e2e2e2; overflow: hidden; padding-left: 432px; }
  .page { width: 1024px; height: 781px; color: #000; font: 12px/14px "DejaVu Sans Condensed", "DejaVu Sans", sans-serif; background: #fff; display: flex; flex-direction: column; }
  .yhead { height: 90px; width: 1023px; flex: none; display: flex; flex-direction: column; justify-content: space-between; border: 2px solid #174b34; border-width: 2px 1px 0 2px; border-radius: 11px 11px 0 0; background: linear-gradient(#9cb8aa 0, #759b88 6px, #105c3d 24px, #097048 51px, #007a50 70px, #007a50); box-shadow: 0 -1px #e2e2e2; }
  .logout { align-self: flex-end; margin: 9px 20px 0 0; font-weight: 700; color: #fff; }
  .ynav { display: flex; align-items: flex-end; gap: 6px; padding-left: 14px; margin-top: -10px; }
  .brand { display: flex; align-items: flex-end; width: 153px; height: 60px; padding-bottom: 32px; color: #fff; }
  .yl { width: 102px; margin-left: -1px; font: 900 31.500px/27px Lato, sans-serif; letter-spacing: 0; }
  .model { border-left: 2px solid #fff; height: 23px; padding: 11px 0 0 5px; margin-left: 6px; font-size: 13px; line-height: 14px; font-weight: 700; }
  .yt { width: 98px; height: 35px; flex: none; border: 2px solid #7fa594; border-bottom: 0; border-radius: 9px 9px 0 0; background: linear-gradient(#204634, #1a9970 23px, #1f9f74); color: #fff; font-size: 15px; line-height: 33px; font-weight: 700; text-align: center; letter-spacing: -.2px; padding-right: 1px; }
  .active { width: 96px; height: 40px; margin: 0 2px 0 0; border-color: #fff; background: linear-gradient(#b5b5b3, #fff 34px); color: #000; line-height: 37px; }
  .body { height: 691px; flex: none; display: flex; padding: 12px 13px 0 14px; background: linear-gradient(#f0f0f0, #fff 62px); }
  aside { width: 160px; background: #ccc; padding: 10px 0 0 15px; }
  .side { width: 153px; height: 27px; padding-left: 9px; background: #f1f1f1; color: #666; font-size: 14px; line-height: 28px; font-weight: 700; }
  .content { width: 620px; margin-left: 8px; padding-top: 1px; background: #f1f1f1; }
  h3 { height: 30px; margin: 0; padding: 0 0 0 83px; display: flex; align-items: center; gap: 16px; font-size: 12px; font-weight: 700; letter-spacing: -.03px; }
  h3 svg { width: 16px; height: 16px; }
  .version, .network { padding-left: 84px; }
  .account { gap: 15px; }
  .common { letter-spacing: 0; }
  .row { height: 30px; display: grid; grid-template-columns: 209.500px 1fr; align-items: center; padding: 2px 0 0 105.500px; letter-spacing: -.09px; }
  .row span:last-child { letter-spacing: -.22px; }
  .notes { width: 200px; margin-left: 8px; display: flex; flex-direction: column; gap: 5px; }
  .notehead { height: 38px; flex: none; display: flex; justify-content: space-between; padding-left: 9.500px; background: #0f6345; color: #fff; font-size: 14px; line-height: 38px; font-weight: 700; }
  .notehead svg { width: 19px; height: 17px; }
  .notebody { flex: 1; border: 1px solid #c8c8c8; border-bottom: 0; background: #e6e6e6; padding: 11px 4px 0 9.500px; letter-spacing: -.03px; }
  .notebody b { font-size: 12.200px; }
  .notebody p { margin: 0 0 14px; }
  .scroll { margin-left: auto; width: 17px; display: flex; flex-direction: column; align-items: center; justify-content: space-between; padding: 6px 0; background: #f1f1f1; }
  .scroll svg { width: 8px; height: 5px; }
  .thumb { width: 13px; height: 576px; background: #c1c1c1; margin: 6px 0 auto; }

  .taskbar { height: 40px; flex: none; display: flex; background: #020202; font: 12px/17px "Noto Sans", sans-serif; color: #fff; }
  .apps { display: flex; gap: 1px; padding-left: 1px; }
  .app { width: 48px; height: 40px; display: grid; place-items: center; padding-top: 1px; border-bottom: 2px solid transparent; }
  .app svg { width: 24px; height: 24px; }
  .windows { padding-right: 2px; }
  .chrome { background: #333; border-color: #76b9ed; margin-left: 1px; margin-right: -1px; }
  .putty, .notepad, .zoiper { width: 40px; margin: 0 4px; border-color: #76b9ed; }
  .chrome { border-image: linear-gradient(90deg, #76b9ed 44px, #4f7c9f 44px) 2; }
  .notepad { border-image: linear-gradient(90deg, #76b9ed 31px, #4f7c9f 31px) 2; }
  .systray { margin-left: auto; display: flex; align-items: center; }
  .systray > svg { width: 16px; height: 16px; margin-right: 8px; }
  .two { display: flex; flex-direction: column; align-items: center; }
  .lang { width: 32px; margin-left: -3px; }
  .date { width: 60px; margin-left: 8px; letter-spacing: -.3px; }
  .notif { margin-left: 17px; }
  .notif svg { width: 24px; height: 24px; }
  .notif text { font: 12px "Noto Sans", sans-serif; fill: #fff; text-anchor: middle; }
  .show { width: 5px; height: 40px; margin-left: 12px; border-left: 1px solid #6a6a6a; }

  .status { height: 24px; flex: none; margin-top: 7px; display: flex; gap: 1px; background: #2b2e39; padding: 1px; }
  .status > div { background: #383c4a; display: flex; align-items: center; }
  .msg { width: 1774px; padding-left: 3px; color: #d3dae3; font-size: 13.300px; letter-spacing: -.06px; }
  .msg svg { width: 14px; height: 16px; margin-right: 3px; }
  .devs { width: 121px; gap: 4px; padding-left: 3px; }
  .status .devs svg, .memo svg { width: 16px; height: 16px; }
  .memo { width: 20px; padding-left: 3px; }
  .ten { font: bold 6.500px "Liberation Sans", sans-serif; fill: #fff; text-anchor: middle; }
</style>
